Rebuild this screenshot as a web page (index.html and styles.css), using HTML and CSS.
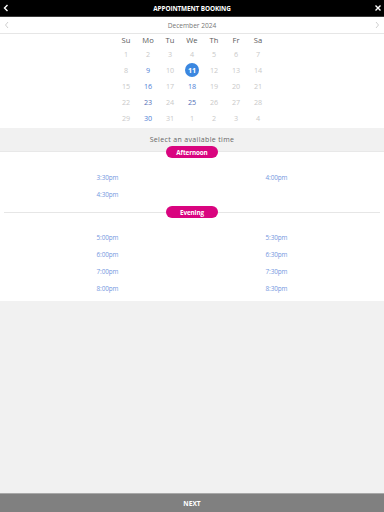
FILE: index.html
```html
<!DOCTYPE html>
<html>
<head>
<meta charset="utf-8">
<link rel="stylesheet" href="styles.css">
</head>
<body>
<div class="app">
  <header class="topbar">
    <svg class="top-icon" width="8" height="8" viewBox="0 0 8 8"><path d="M5.5 1 L2.5 4 L5.5 7" fill="none" stroke="#fff" stroke-width="1.4"/></svg>
    <div class="title">APPOINTMENT BOOKING</div>
    <svg class="top-icon" width="8" height="8" viewBox="0 0 8 8"><path d="M1.5 1.5 L6.5 6.5 M6.5 1.5 L1.5 6.5" fill="none" stroke="#fff" stroke-width="1.4"/></svg>
  </header>
  <div class="monthbar">
    <svg width="6" height="8" viewBox="0 0 6 8"><path d="M4 1 L1.5 4 L4 7" fill="none" stroke="#c4c4c4" stroke-width="0.8"/></svg>
    <div class="month">December 2024</div>
    <svg width="6" height="8" viewBox="0 0 6 8"><path d="M2 1 L4.5 4 L2 7" fill="none" stroke="#c4c4c4" stroke-width="0.8"/></svg>
  </div>
  <div class="calendar">
    <div class="wd">Su</div><div class="wd">Mo</div><div class="wd">Tu</div><div class="wd">We</div><div class="wd">Th</div><div class="wd">Fr</div><div class="wd">Sa</div>
    <div class="d">1</div><div class="d">2</div><div class="d">3</div><div class="d">4</div><div class="d">5</div><div class="d">6</div><div class="d">7</div>
    <div class="d">8</div><div class="d av">9</div><div class="d">10</div><div class="d"><span class="sel">11</span></div><div class="d">12</div><div class="d">13</div><div class="d">14</div>
    <div class="d">15</div><div class="d av">16</div><div class="d">17</div><div class="d av">18</div><div class="d">19</div><div class="d">20</div><div class="d">21</div>
    <div class="d">22</div><div class="d av2">23</div><div class="d">24</div><div class="d av2">25</div><div class="d">26</div><div class="d">27</div><div class="d">28</div>
    <div class="d">29</div><div class="d av">30</div><div class="d">31</div><div class="d">1</div><div class="d">2</div><div class="d">3</div><div class="d">4</div>
  </div>
  <div class="prompt">Select an available time</div>
  <div class="times">
    <div class="group-head first"><span class="pill">Afternoon</span></div>
    <div class="slots">
      <div class="slot">3:30pm</div><div class="slot">4:00pm</div>
      <div class="slot">4:30pm</div>
    </div>
    <div class="group-head divider"><span class="pill">Evening</span></div>
    <div class="slots last">
      <div class="slot">5:00pm</div><div class="slot">5:30pm</div>
      <div class="slot">6:00pm</div><div class="slot">6:30pm</div>
      <div class="slot">7:00pm</div><div class="slot">7:30pm</div>
      <div class="slot">8:00pm</div><div class="slot">8:30pm</div>
    </div>
  </div>
  <div class="filler"></div>
  <footer class="footer">NEXT</footer>
</div>
</body>
</html>
```
FILE: styles.css
```css
* { box-sizing: border-box; }
html, body { margin: 0; padding: 0; }
body {
  font-family: "Open Sans", "Liberation Sans", sans-serif;
  background: #f1f1f1;
}
.app {
  display: flex;
  flex-direction: column;
  height: 512px;
  width: 384px;
}
.topbar {
  height: 17px;
  background: #000;
  border-bottom: 1px solid #3a3a3a;
  display: flex;
  align-items: center;
  justify-content: space-between;
  padding: 0 2px 0 2px;
}
.top-icon { display: block; }
.title {
  color: #fff;
  font-weight: 700;
  font-size: 6.4px;
  letter-spacing: -0.1px;
}
.monthbar {
  height: 17px;
  background: #fff;
  border-bottom: 1px solid #e6e6e6;
  display: flex;
  align-items: center;
  justify-content: space-between;
  padding: 0 4px;
}
.month {
  color: #777;
  font-size: 6.6px;
}
.calendar {
  background: #fff;
  display: grid;
  grid-template-columns: repeat(7, 22px);
  grid-template-rows: 12px repeat(5, 16px);
  justify-content: center;
  padding-bottom: 2px;
  text-align: center;
}
.wd {
  font-size: 7.6px;
  color: #5a5a5a;
  line-height: 12px;
}
.d {
  font-size: 7.2px;
  color: #c9c9c9;
  display: flex;
  align-items: center;
  justify-content: center;
}
.d.av { color: #4f82d6; }
.d.av2 { color: #5670b8; }
.sel {
  width: 14px;
  height: 14px;
  border-radius: 50%;
  background: #3b87e0;
  color: #fff;
  font-weight: 700;
  display: flex;
  align-items: center;
  justify-content: center;
}
.prompt {
  height: 24px;
  display: flex;
  align-items: center;
  justify-content: center;
  color: #666;
  font-size: 7px;
  letter-spacing: 0.35px;
  background: #f1f1f1;
  border-bottom: 1px solid #e8e8e8;
}
.times {
  background: #fff;
  display: flex;
  flex-direction: column;
}
.group-head {
  height: 12px;
  display: flex;
  justify-content: center;
  align-items: center;
}
.group-head.first { margin-top: -6px; }
.group-head.divider {
  margin: 3px 4px 0;
  background: linear-gradient(#e6e6e6, #e6e6e6) center / 100% 1px no-repeat;
}
.pill {
  width: 52px;
  height: 12px;
  border-radius: 6px;
  background: #d9047f;
  color: #fff;
  font-size: 6.3px;
  font-weight: 700;
  display: flex;
  align-items: center;
  justify-content: center;
  letter-spacing: -0.1px;
}
.slots {
  display: grid;
  grid-template-columns: 169px 169px;
  grid-auto-rows: 17px;
  justify-content: center;
  padding-top: 11px;
}
.slots.last { padding-top: 11px; padding-bottom: 4px; }
.slot {
  display: flex;
  align-items: center;
  justify-content: center;
  font-size: 6.4px;
  color: #7497e0;
  letter-spacing: -0.1px;
}
.filler { flex: 1; background: #f1f1f1; }
.footer {
  height: 19px;
  background: #808080;
  border-top: 1px solid #a8a8a8;
  color: #fff;
  font-weight: 700;
  font-size: 6.6px;
  display: flex;
  align-items: center;
  justify-content: center;
}
```
